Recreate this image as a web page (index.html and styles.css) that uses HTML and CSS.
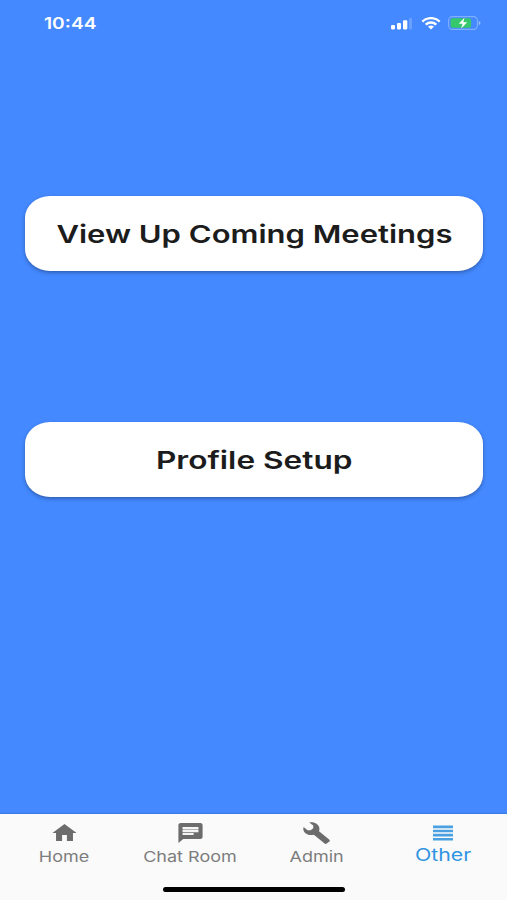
FILE: index.html
```html
<!DOCTYPE html>
<html lang="en">
<head>
<meta charset="utf-8">
<meta name="viewport" content="width=device-width">
<title>Other</title>
<link rel="stylesheet" href="styles.css">
</head>
<body>
<div class="app">
  <header class="status">
    <span class="time wide">10:44</span>
    <div class="indicators">
      <svg class="signal" viewBox="0 0 23 12" preserveAspectRatio="none"><g fill="#fff"><rect x="1" y="6.500" width="4" height="4" rx="1"/><rect x="7" y="4.700" width="4" height="5.800" rx="1"/><rect x="13" y="2" width="4.300" height="8.500" rx="1"/><rect x="19" y="0" width="3" height="10.500" rx="1" opacity=".2"/></g></svg>
      <svg class="wifi" viewBox="0 0 20 13"><g fill="none" stroke="#fff" stroke-width="2.3"><path d="M1.3 4.6C6-.1 14-.1 18.700 4.600"/><path d="M4.700 7.600C7.600 4.800 12.400 4.800 15.300 7.600"/></g><path fill="#fff" d="M7 9.500Q10 7.500 13 9.500L10 12.500Z"/></svg>
      <svg class="battery" viewBox="0 0 33 14"><rect x=".6" y=".6" width="28.800" height="12.800" rx="3.800" fill="none" stroke="#fff" stroke-opacity=".32" stroke-width="1.100"/><rect x="2.600" y="2.300" width="20.500" height="9.400" rx="2" fill="#35c96b"/><path d="M30.700 5v4q1.800-.6 1.800-2t-1.800-2" fill="#fff" opacity=".45"/><path d="M16.500 1.700 10.700 7.700h3.800l-1.300 4.700 6-6.200h-3.900z" fill="#fff"/></svg>
    </div>
  </header>
  <main class="content">
    <button class="card"><span class="wide meetings">View Up Coming Meetings</span></button>
    <button class="card"><span class="wide profile">Profile Setup</span></button>
  </main>
  <nav class="tabs">
    <a class="tab"><svg class="icon home" viewBox="0 0 24 24" preserveAspectRatio="none"><path d="M10 20v-6h4v6h5v-8h3L12 3 2 12h3v8z"/></svg><span class="wide">Home</span></a>
    <a class="tab"><svg class="icon chat" viewBox="0 0 24 24" preserveAspectRatio="none"><path d="M20 2H4c-1.100 0-2 .9-2 2v18l4-4h14c1.100 0 2-.9 2-2V4c0-1.100-.9-2-2-2z"/><path class="lines-bg" d="M5.500 6h13v5.400h-13zM5.500 12h9v2h-9z"/><path class="lines-fg" d="M5.500 6h13v2h-13zM5.500 9h13v2h-13zM5.500 12h9v2h-9z"/></svg><span class="wide">Chat Room</span></a>
    <a class="tab"><svg class="icon tool" viewBox="0 0 24 24" preserveAspectRatio="none"><path d="M22.700 18.800l-8.600-8.600c.9-2.500.1-5.200-1.800-7.100C10.500 1.400 8.200.8 6 1.500L9.300 4.500v2.700L7.200 9.200H4.600L1.300 6C.7 8.300 1.200 10.600 2.900 12.200c1.900 1.800 4.600 2.400 6.900 1.500l8.900 8.900c.5.500 1.300.5 1.800 0l2.200-2.200c.5-.5.5-1.100 0-1.600z"/></svg><span class="wide">Admin</span></a>
    <a class="tab active"><svg class="icon lines" viewBox="0 0 30 25" preserveAspectRatio="none"><path d="M5 4.500h20v2.700H5zM5 8.700h20v2.600H5zM5 12.800h20v2.600H5zM5 17h20v2.500H5z"/></svg><span class="wide">Other</span></a>
    <i class="home-indicator"></i>
  </nav>
</div>
</body>
</html>
```
FILE: styles.css
```css
* { box-sizing: border-box; }
body { margin: 0; font-family: Inter, "Liberation Sans", sans-serif; }
.app { width: 507px; height: 900px; display: flex; flex-direction: column; background: #4489ff; overflow: hidden; }
.wide { display: inline-block; white-space: nowrap; transform: scaleX(1.2); }
.status { height: 47px; display: flex; justify-content: space-between; padding: 0 26px 0 44px; color: #fff; }
.time { margin-top: 13px; font-size: 16px; line-height: 20px; font-weight: 600; transform-origin: left; }
.indicators { display: flex; padding-top: 16px; }
.signal { width: 23px; height: 13px; margin-top: 2px; }
.wifi { width: 20px; height: 13px; margin: 1px 7px 0 8px; }
.battery { width: 33px; height: 14px; }
.content { flex: 1; display: flex; flex-direction: column; gap: 151px; padding: 149px 24px 0 25px; }
.card { height: 75px; border: 0; padding: 0; border-radius: 25px / 22px; background: #fff; color: #1c1c1c; font: 600 24.5px/30px Inter, "Liberation Sans", sans-serif; text-align: center; box-shadow: 0 2px 4px rgba(0, 0, 0, .24), 0 1px 2px rgba(0, 0, 0, .1); }
.meetings { transform: scaleX(1.266); }
.profile { transform: scaleX(1.29); }
.tabs { position: relative; height: 86px; display: grid; grid-template-columns: 128px 124px 129px 124px; padding-top: 7px; background: #fafafa; color: #7d7d7d; box-shadow: 0 -1px 1px rgba(0, 0, 0, .1); }
.tab { display: flex; flex-direction: column; align-items: center; font-size: 15px; line-height: 18px; }
.icon { width: 29px; height: 24px; fill: #6c6c6c; margin-bottom: 3px; }
.chat .lines-bg { fill: #b4b4b4; }
.chat .lines-fg { fill: #f4f4f4; }
.active { color: #3295e2; font-size: 17.5px; }
.active .icon { width: 30px; height: 25px; fill: #4ba1e0; margin-bottom: 0; }
.active .wide { transform: scaleX(1.22); }
.home-indicator { position: absolute; left: 163px; bottom: 8px; width: 182px; height: 5px; border-radius: 3px; background: #000; }
```
